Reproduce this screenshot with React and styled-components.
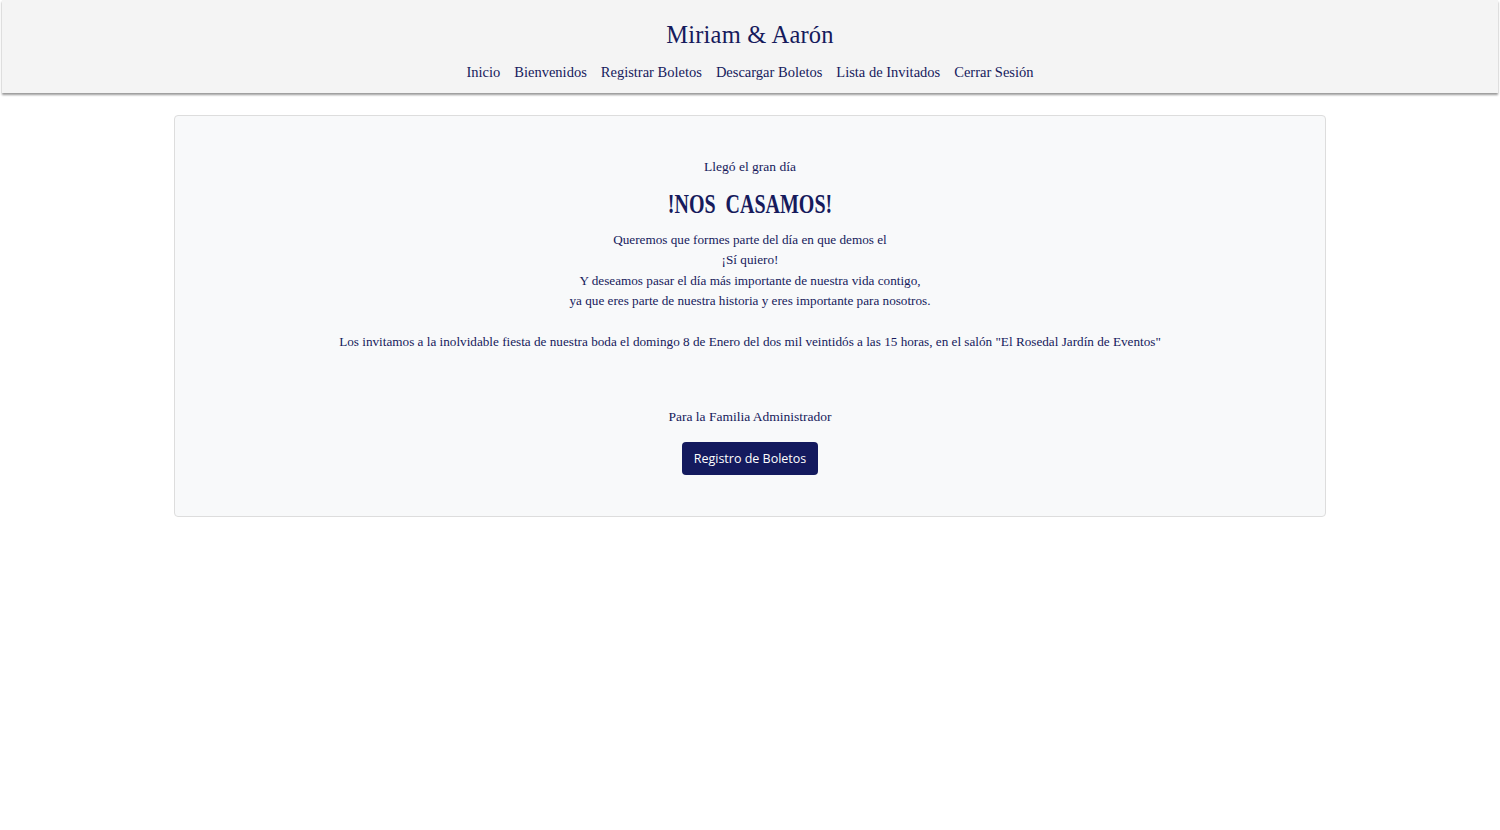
import styled, { createGlobalStyle } from 'styled-components';

const GlobalStyle = createGlobalStyle`
    body {
        margin: 0;
        background: #ffffff;
        font-family: "Liberation Serif", "Times New Roman", serif;
        color: #161a5c;
    }
`;

const links = ['Inicio', 'Bienvenidos', 'Registrar Boletos', 'Descargar Boletos', 'Lista de Invitados', 'Cerrar Sesión'];

const App = () => {
    return (
        <>
            <GlobalStyle />
            <Header>
                <Brand>Miriam &amp; Aarón</Brand>
                <Nav>
                    {links.map((l) => (
                        <NavLink key={l}>{l}</NavLink>
                    ))}
                </Nav>
            </Header>

            <Card>
                <Kicker>Llegó el gran día</Kicker>
                <Headline>
                    <span>!NOS&nbsp; CASAMOS!</span>
                </Headline>
                <Paragraph>
                    Queremos que formes parte del día en que demos el<br />
                    ¡Sí quiero!<br />
                    Y deseamos pasar el día más importante de nuestra vida contigo,<br />
                    ya que eres parte de nuestra historia y eres importante para nosotros.
                </Paragraph>
                <Paragraph>
                    Los invitamos a la inolvidable fiesta de nuestra boda el domingo 8 de Enero del dos mil veintidós a las 15 horas, en el salón "El Rosedal Jardín de Eventos"
                </Paragraph>
                <Family>Para la Familia Administrador</Family>
                <Button>Registro de Boletos</Button>
            </Card>
        </>
    );
};

const Header = styled.header`
    background: #f4f4f4;
    height: 93px;
    box-sizing: border-box;
    padding-top: 20px;
    display: flex;
    flex-direction: column;
    align-items: center;
    box-shadow: 0 2px 2px rgba(0, 0, 0, 0.4);
    margin: 0 2px;
`;

const Brand = styled.div`
    font-size: 24.5px;
    line-height: 30px;
    letter-spacing: 0.2px;
    color: #161a5c;
`;

const Nav = styled.nav`
    display: flex;
    gap: 14px;
    margin-top: 12px;
`;

const NavLink = styled.a`
    font-size: 14.5px;
    line-height: 20px;
    color: #161a5c;
    cursor: pointer;
`;

const Card = styled.section`
    width: 1152px;
    margin: 22px auto 0;
    box-sizing: border-box;
    background: #f8f9fa;
    border: 1px solid #dddddd;
    border-radius: 4px;
    padding: 41px 20px 41px;
    display: flex;
    flex-direction: column;
    align-items: center;
    text-align: center;
`;

const Kicker = styled.p`
    margin: 0;
    font-size: 13.5px;
    line-height: 20px;
`;

const Headline = styled.h1`
    margin: 9px 0 8px;
    font-size: 27px;
    line-height: 36px;
    font-weight: bold;

    span {
        display: inline-block;
        transform: scaleX(0.74);
    }
`;

const Paragraph = styled.p`
    margin: 0 0 20px;
    font-size: 13.2px;
    line-height: 20.4px;
`;

const Family = styled.p`
    margin: 35px 0 15px;
    font-size: 13.5px;
    line-height: 20px;
`;

const Button = styled.button`
    background: #141a5e;
    color: #ffffff;
    border: none;
    border-radius: 4px;
    height: 33px;
    padding: 0 12px;
    font-family: "Open Sans", sans-serif;
    font-size: 12.5px;
    cursor: pointer;
`;

export default App;
